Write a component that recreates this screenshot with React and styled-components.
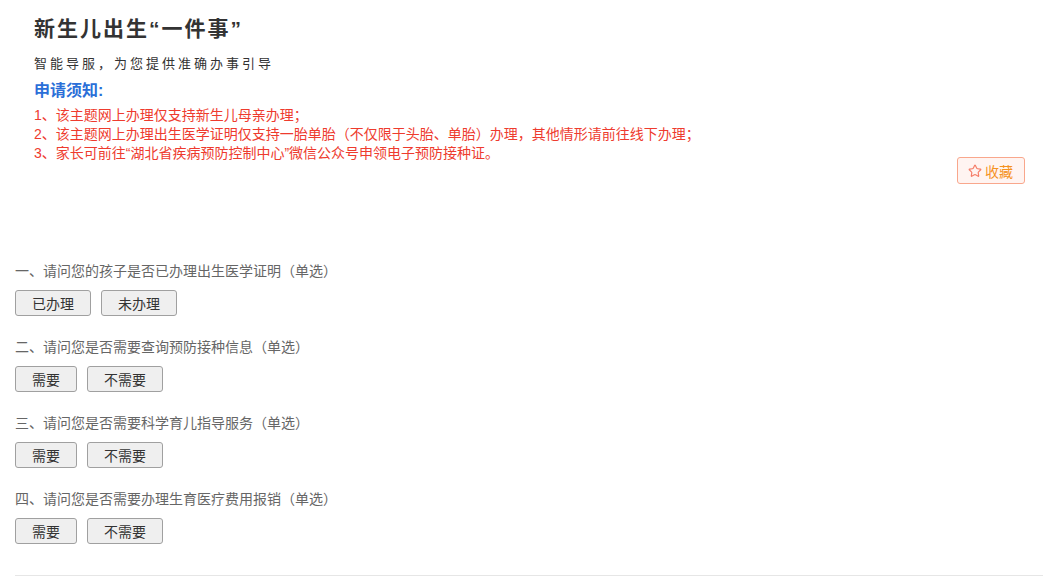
import React from "react";
import styled, { createGlobalStyle } from "styled-components";
import { Star } from "lucide-react";

const GlobalStyle = createGlobalStyle`
  body {
    margin: 0;
    background: #fff;
    font-family: "Liberation Sans", "Noto Sans CJK SC", sans-serif;
    color: #333;
  }
`;

const notices = [
  "1、该主题网上办理仅支持新生儿母亲办理；",
  "2、该主题网上办理出生医学证明仅支持一胎单胎（不仅限于头胎、单胎）办理，其他情形请前往线下办理；",
  "3、家长可前往“湖北省疾病预防控制中心”微信公众号申领电子预防接种证。",
];

const questions = [
  { title: "一、请问您的孩子是否已办理出生医学证明（单选）", options: ["已办理", "未办理"] },
  { title: "二、请问您是否需要查询预防接种信息（单选）", options: ["需要", "不需要"] },
  { title: "三、请问您是否需要科学育儿指导服务（单选）", options: ["需要", "不需要"] },
  { title: "四、请问您是否需要办理生育医疗费用报销（单选）", options: ["需要", "不需要"] },
];

function App() {
  return (
    <Page>
      <GlobalStyle />
      <Header>
        <Title>新生儿出生“一件事”</Title>
        <Subtitle>智能导服，为您提供准确办事引导</Subtitle>
        <NoticeHead>申请须知:</NoticeHead>
        <NoticeList>
          {notices.map((n) => (
            <li key={n}>{n}</li>
          ))}
        </NoticeList>
        <ActionRow>
          <CollectButton>
            <Star size={14} strokeWidth={2} />
            收藏
          </CollectButton>
        </ActionRow>
      </Header>
      <Questions>
        {questions.map((q) => (
          <Question key={q.title}>
            <QuestionText>{q.title}</QuestionText>
            <Options>
              {q.options.map((o) => (
                <OptionButton key={o}>{o}</OptionButton>
              ))}
            </Options>
          </Question>
        ))}
      </Questions>
    </Page>
  );
}

export default App;

const Page = styled.div`
  width: 100%;
  min-height: 583px;
`;

const Header = styled.div`
  padding: 14px 18px 0 34px;
  display: flex;
  flex-direction: column;
`;

const Title = styled.h1`
  margin: 0;
  font-size: 21px;
  line-height: 30px;
  font-weight: bold;
  letter-spacing: 2px;
  color: #333;
`;

const Subtitle = styled.div`
  margin-top: 10px;
  font-size: 13px;
  line-height: 20px;
  letter-spacing: 3px;
  color: #333;
`;

const NoticeHead = styled.div`
  margin-top: 6px;
  font-size: 16px;
  line-height: 22px;
  font-weight: bold;
  color: #2b6fd8;
`;

const NoticeList = styled.ul`
  margin: 4px 0 0;
  padding: 0;
  list-style: none;
  li {
    font-size: 14px;
    line-height: 19px;
    color: #ee3b2e;
  }
`;

const ActionRow = styled.div`
  display: flex;
  justify-content: flex-end;
  margin-top: -6px;
`;

const CollectButton = styled.button`
  display: flex;
  align-items: center;
  gap: 3px;
  height: 27px;
  padding: 0 11px 0 10px;
  border: 1px solid #f9a78c;
  border-radius: 3px;
  background: #fff4f1;
  color: #f5921f;
  font-family: inherit;
  font-size: 14px;
  cursor: pointer;
  svg {
    color: #f57d68;
  }
`;

const Questions = styled.div`
  margin: 77px 0 0 15px;
  padding-bottom: 31px;
  border-bottom: 1px solid #e6e6e6;
  display: flex;
  flex-direction: column;
  gap: 21px;
`;

const Question = styled.div`
  display: flex;
  flex-direction: column;
  gap: 9px;
`;

const QuestionText = styled.div`
  font-size: 14px;
  line-height: 20px;
  color: #666;
`;

const Options = styled.div`
  display: flex;
  gap: 10px;
`;

const OptionButton = styled.button`
  height: 26px;
  padding: 0 16px;
  border: 1px solid #a0a0a0;
  border-radius: 3px;
  background: #efefef;
  color: #333;
  font-family: inherit;
  font-size: 14px;
  cursor: pointer;
`;
